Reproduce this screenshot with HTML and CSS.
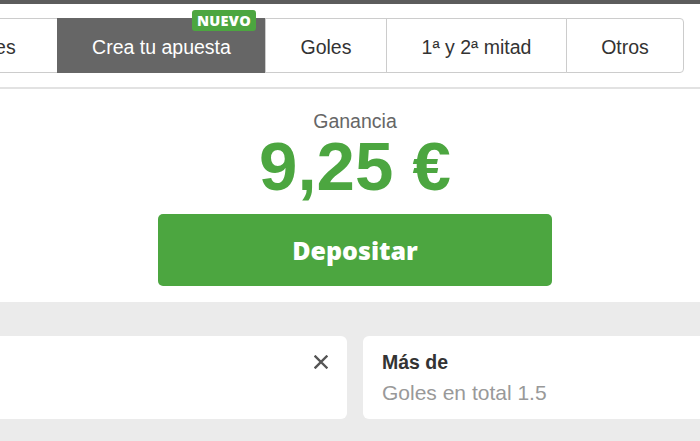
FILE: index.html
```html
<!DOCTYPE html>
<html lang="es">
<head>
<meta charset="utf-8">
<title>Crea tu apuesta</title>
<link rel="stylesheet" href="styles.css">
</head>
<body>
<div class="topbar"></div>
<nav class="tabs">
  <div class="tab tab-first">Principales</div>
  <div class="tab tab-active">Crea tu apuesta<span class="badge">NUEVO</span></div>
  <div class="tab tab-goles">Goles</div>
  <div class="tab tab-mitad">1ª y 2ª mitad</div>
  <div class="tab tab-last">Otros</div>
</nav>
<section class="panel">
  <div class="label">Ganancia</div>
  <div class="amount">9,25 €</div>
  <button class="deposit">Depositar</button>
</section>
<section class="selections">
  <div class="card">
    <div class="card-text"></div>
    <svg class="close" viewBox="0 0 14 14" width="14" height="14"><path d="M1.5 1.5 L12.5 12.5 M12.5 1.5 L1.5 12.5" stroke="#555" stroke-width="2.4" stroke-linecap="square" fill="none"/></svg>
  </div>
  <div class="card">
    <div class="card-text">
      <div class="card-title">Más de</div>
      <div class="card-sub">Goles en total 1.5</div>
    </div>
    <svg class="close" viewBox="0 0 14 14" width="14" height="14"><path d="M1.5 1.5 L12.5 12.5 M12.5 1.5 L1.5 12.5" stroke="#555" stroke-width="2.4" stroke-linecap="square" fill="none"/></svg>
  </div>
</section>
</body>
</html>
```
FILE: styles.css
```css
html, body {
  margin: 0;
  padding: 0;
  background: #ffffff;
  font-family: "Liberation Sans", Arial, sans-serif;
  overflow: hidden;
  height: 441px;
}

.topbar {
  height: 4px;
  background: #5c5c5c;
}

.tabs {
  margin-top: 5px;
  padding-top: 9px;
  padding-right: 16px;
  display: flex;
  justify-content: flex-end;
  overflow: hidden;
}

.tab {
  flex: 0 0 auto;
  box-sizing: border-box;
  height: 55px;
  padding-top: 3px;
  border: 1px solid #cccccc;
  margin-left: -1px;
  display: flex;
  align-items: center;
  justify-content: center;
  font-size: 19.5px;
  color: #333333;
  background: #ffffff;
  position: relative;
}

.tab-first { width: 180px; }
.tab-active {
  width: 209px;
  background: #666666;
  border-color: #666666;
  color: #ffffff;
}
.tab-goles { width: 122px; }
.tab-mitad { width: 181px; }
.tab-last {
  width: 118px;
  border-radius: 0 4px 4px 0;
}

.badge {
  position: absolute;
  top: -9px;
  right: 9px;
  width: 64px;
  height: 21px;
  border-radius: 3px;
  background: #4ca640;
  color: #ffffff;
  font-family: "Open Sans", "DejaVu Sans", sans-serif;
  font-weight: 800;
  font-size: 14.5px;
  line-height: 21px;
  text-align: center;
  letter-spacing: 0.3px;
}

.panel {
  margin-top: 14px;
  border-top: 2px solid #e2e2e2;
  padding: 21px 0 16px 10px;
  display: flex;
  flex-direction: column;
  align-items: center;
}

.label {
  font-size: 19.5px;
  line-height: 22px;
  color: #666666;
}

.amount {
  font-size: 69px;
  line-height: 70px;
  font-weight: bold;
  color: #4ca640;
}

.deposit {
  margin-top: 12px;
  width: 394px;
  height: 72px;
  border: 0;
  border-radius: 5px;
  background: #4ca640;
  color: #ffffff;
  font-family: "Open Sans", "DejaVu Sans", sans-serif;
  font-weight: 800;
  font-size: 25px;
  padding: 0;
}

.selections {
  background: #ebebeb;
  padding: 34px 0 0 10px;
  display: flex;
  justify-content: center;
  gap: 16px;
  height: 139px;
  box-sizing: border-box;
}

.card {
  flex: 0 0 400px;
  box-sizing: border-box;
  height: 83px;
  background: #ffffff;
  border-radius: 6px;
  padding: 12px 19px 12px 19px;
  display: flex;
  justify-content: space-between;
  align-items: flex-start;
}

.card-text {
  font-size: 19.5px;
  line-height: 28px;
}

.card-title {
  font-weight: bold;
  color: #333333;
}

.card-sub {
  margin-top: 3px;
  font-size: 21px;
  color: #999999;
}

.close {
  margin-top: 7px;
  flex: 0 0 auto;
}
```
